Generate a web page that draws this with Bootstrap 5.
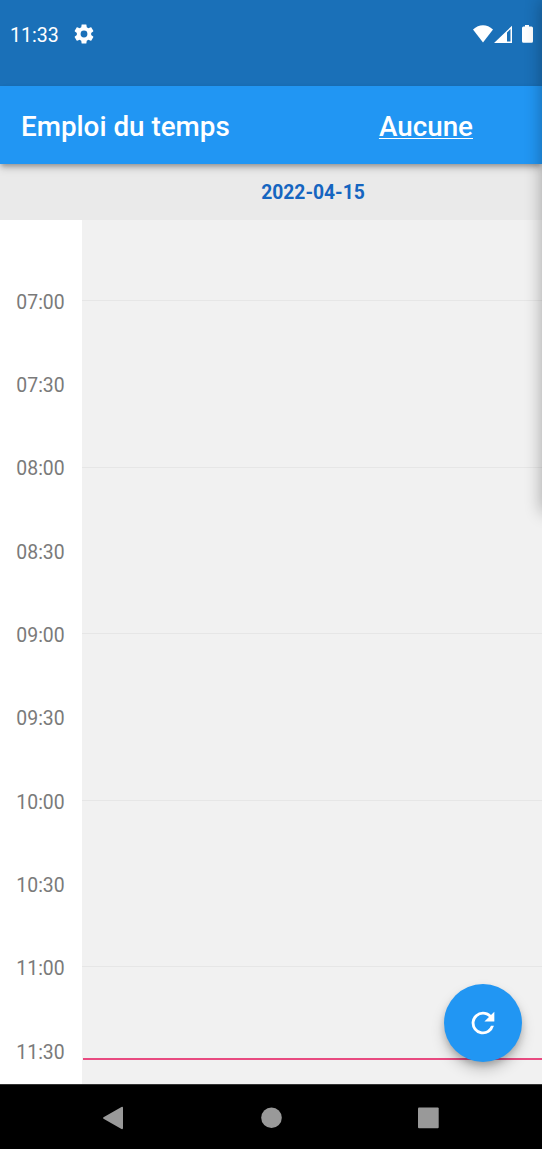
<!DOCTYPE html>
<html lang="fr">
<head>
<meta charset="utf-8">
<meta name="viewport" content="width=device-width, initial-scale=1">
<title>Emploi du temps</title>
<link href="https://cdn.jsdelivr.net/npm/bootstrap@5.3.0/dist/css/bootstrap.min.css" rel="stylesheet">
<style>
body { font-family: Roboto, "Liberation Sans", sans-serif; background: #f1f1f1; }
.screen { height: 1149px; }
.status-bar { height: 86px; background: #1a70b8; padding: 0 8px 18px 10px; }
.clock { font-size: 19.6px; line-height: 24px; padding-top: 3px; }
.gear { margin-left: 15px; }
.app-bar { height: 78px; background: #2196f3; padding: 4px 69px 0 21px; z-index: 2;
  box-shadow: 0 3px 5px -1px rgba(0,0,0,.3), 0 5px 8px rgba(0,0,0,.12); }
.app-title { font-size: 27.8px; font-weight: 500; line-height: 36px; }
.app-link { text-decoration-thickness: 1px; text-underline-offset: 2px; }
.day-head { height: 56px; background: #eaeaea; padding: 2px 0 0 84px; }
.day-label { font-size: 19.3px; font-weight: 700; line-height: 24px; color: #1565c0; }
.hours { width: 82px; padding: 40.6px 1px 0 0; background: #fff; }
.slot { height: 83.33px; font-size: 19.4px; color: #7a7a7a; }
.day-grid { padding-top: 80px; background: #f1f1f1; }
.hour-line { height: 166.6px; border-top: 1px solid #e6e6e6; }
.now-line { top: 838px; left: 1px; height: 2px; background: #e84a80; }
.fab { width: 78px; height: 78px; right: 20px; top: 764px; background: #2196f3;
  box-shadow: 0 4px 7px -1px rgba(0,0,0,.22), 0 8px 14px rgba(0,0,0,.18); }
.nav-keys { height: 65px; background: #000; border-top: 1px solid #333; }
.drawer-edge { top: 0; left: 100%; width: 40px; height: 512px; z-index: 3; box-shadow: 0 0 17px rgba(0,0,0,.32); }
</style>
</head>
<body>
<div class="screen position-relative d-flex flex-column overflow-hidden">
  <header class="status-bar d-flex align-items-center text-white flex-shrink-0">
    <span class="clock">11:33</span>
    <svg class="gear" width="20" height="20" viewBox="2 2 20 20" fill="#fff"><path d="M19.14 12.94c.04-.3.06-.61.06-.94 0-.32-.02-.64-.07-.94l2.03-1.58c.18-.14.23-.41.12-.61l-1.92-3.32c-.12-.22-.37-.29-.59-.22l-2.39.96c-.5-.38-1.03-.7-1.62-.94l-.36-2.54c-.04-.24-.24-.41-.48-.41h-3.84c-.24 0-.43.17-.47.41l-.36 2.54c-.59.24-1.13.57-1.62.94l-2.39-.96c-.22-.08-.47 0-.59.22L2.74 8.87c-.12.21-.08.47.12.61l2.03 1.58c-.05.3-.09.63-.09.94s.02.64.07.94l-2.03 1.58c-.18.14-.23.41-.12.61l1.92 3.32c.12.22.37.29.59.22l2.39-.96c.5.38 1.03.7 1.62.94l.36 2.54c.05.24.24.41.48.41h3.84c.24 0 .44-.17.47-.41l.36-2.54c.59-.24 1.13-.56 1.62-.94l2.39.96c.22.08.47 0 .59-.22l1.92-3.32c.12-.22.07-.47-.12-.61l-2.01-1.58zM12 15.4A3.4 3.4 0 1 1 12 8.600a3.400 3.400 0 0 1 0 6.800z"/></svg>
    <svg class="ms-auto" width="61" height="18" viewBox="0 0 61 18" fill="#fff">
      <path d="M0 4.600C6-1.100 14-1.100 20 4.600L10 17.600z"/>
      <path fill-rule="evenodd" d="M21 18L39 .800v17.200zM34 7.500v9h3.500v-12.400z"/>
      <path d="M52 0h4v1.500h2.500q1.500 0 1.500 1.500v13.300q0 1.500-1.500 1.500h-8q-1.500 0-1.500-1.500V3q0-1.500 1.500-1.500H52z"/>
    </svg>
  </header>
  <nav class="app-bar position-relative d-flex align-items-center justify-content-between text-white flex-shrink-0">
    <h1 class="app-title m-0">Emploi du temps</h1>
    <a class="app-title app-link text-white" href="#">Aucune</a>
  </nav>
  <div class="day-head d-flex align-items-center justify-content-center flex-shrink-0">
    <span class="day-label">2022-04-15</span>
  </div>
  <main class="position-relative d-flex flex-grow-1 overflow-hidden">
    <div class="hours flex-shrink-0">
      <div class="slot d-flex align-items-center justify-content-center">07:00</div>
      <div class="slot d-flex align-items-center justify-content-center">07:30</div>
      <div class="slot d-flex align-items-center justify-content-center">08:00</div>
      <div class="slot d-flex align-items-center justify-content-center">08:30</div>
      <div class="slot d-flex align-items-center justify-content-center">09:00</div>
      <div class="slot d-flex align-items-center justify-content-center">09:30</div>
      <div class="slot d-flex align-items-center justify-content-center">10:00</div>
      <div class="slot d-flex align-items-center justify-content-center">10:30</div>
      <div class="slot d-flex align-items-center justify-content-center">11:00</div>
      <div class="slot d-flex align-items-center justify-content-center">11:30</div>
    </div>
    <div class="day-grid position-relative flex-grow-1">
      <div class="hour-line"></div>
      <div class="hour-line"></div>
      <div class="hour-line"></div>
      <div class="hour-line"></div>
      <div class="hour-line"></div>
      <div class="now-line position-absolute end-0"></div>
    </div>
    <button class="fab btn rounded-circle border-0 p-0 position-absolute d-flex align-items-center justify-content-center" aria-label="Actualiser">
      <svg width="34" height="34" viewBox="0 0 24 24" fill="#fff"><path d="M17.650 6.350A7.960 7.960 0 0 0 12 4a8 8 0 1 0 7.730 10h-2.080A6 6 0 1 1 12 6c1.660 0 3.140.69 4.220 1.780L13 11h7V4z"/></svg>
    </button>
  </main>
  <footer class="nav-keys flex-shrink-0">
    <svg class="d-block" width="542" height="64" viewBox="0 1085 542 64" fill="#999">
      <path d="M103.500 1117.200L121.500 1107q1.500-.600 1.500 1v20q0 1.600-1.500 1l-18-10.200q-1-.800 0-1.600z"/>
      <circle cx="271.500" cy="1117.700" r="10.300"/>
      <rect x="418" y="1107.500" width="20.700" height="20.700" rx="1"/>
    </svg>
  </footer>
  <div class="drawer-edge position-absolute"></div>
</div>
<script src="https://cdn.jsdelivr.net/npm/bootstrap@5.3.0/dist/js/bootstrap.bundle.min.js"></script>
</body>
</html>
